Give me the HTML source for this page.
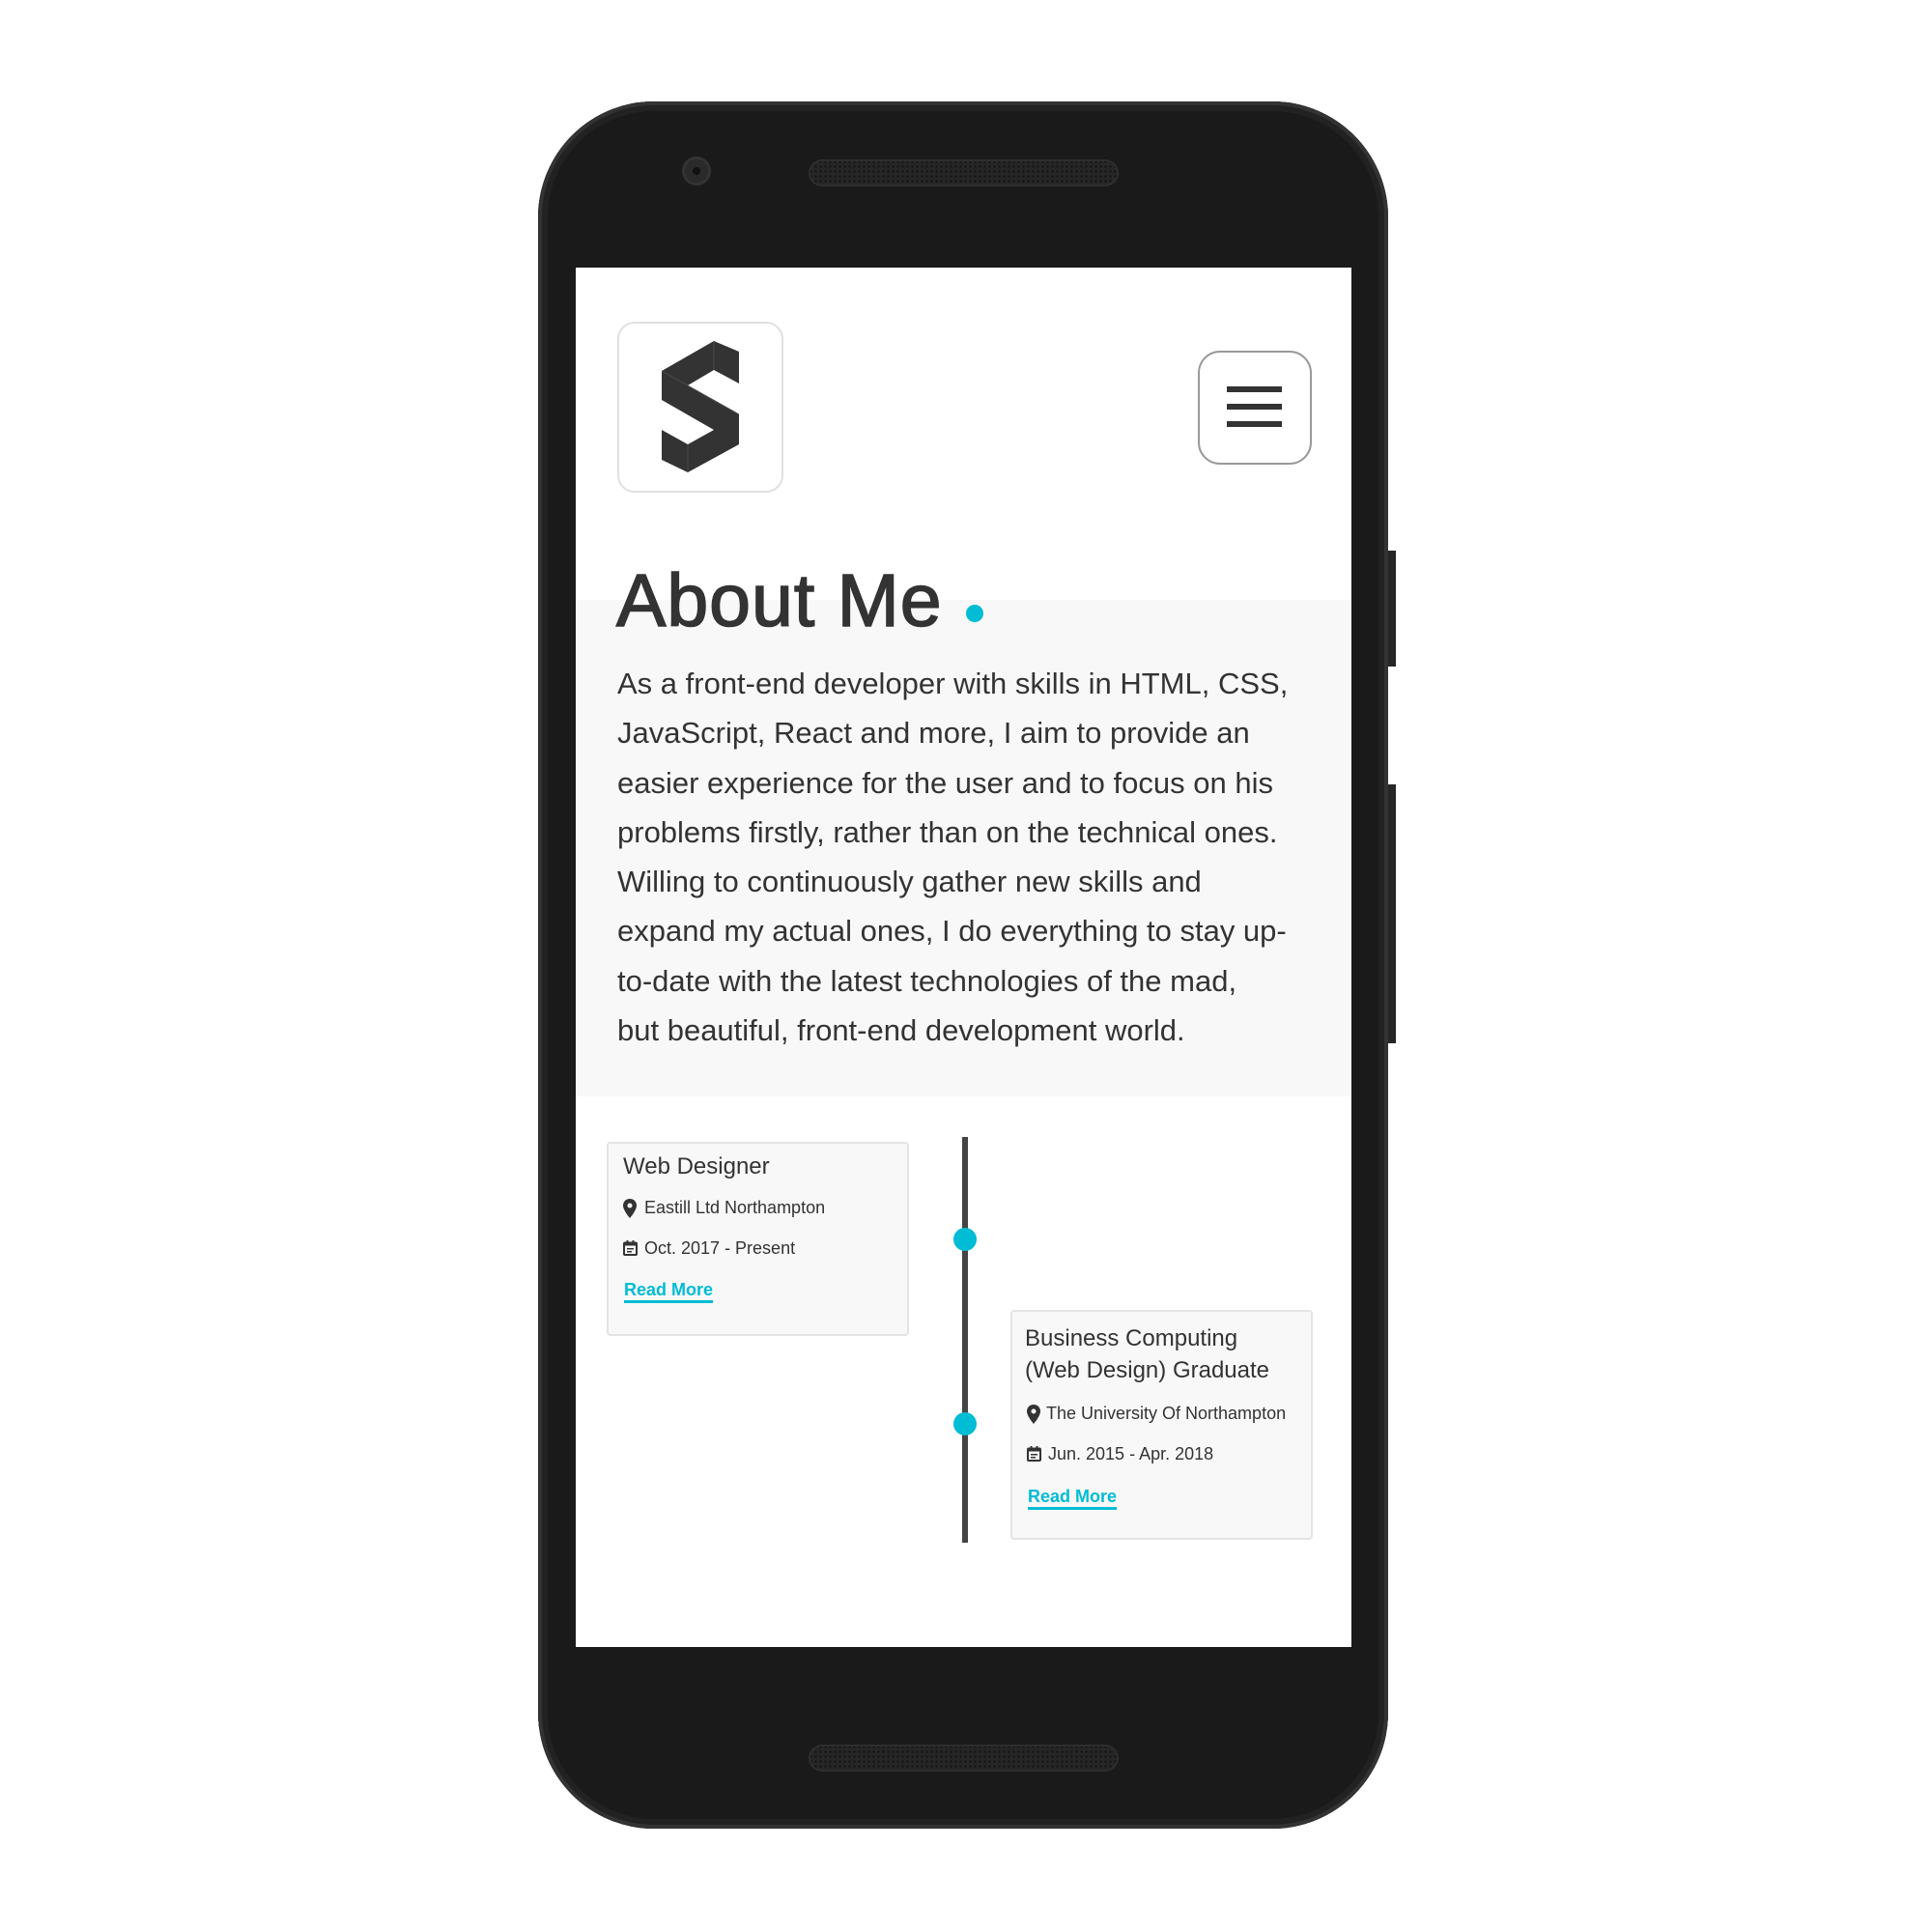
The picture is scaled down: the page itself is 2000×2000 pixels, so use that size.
<!DOCTYPE html>
<html><head><meta charset="utf-8">
<style>
html,body{margin:0;padding:0;background:#fff;width:2000px;height:2000px;overflow:hidden;font-family:"Liberation Sans","DejaVu Sans",sans-serif}
.a{position:absolute}
.phone{left:557px;top:105px;width:880px;height:1788px;border-radius:120px;background:#1a1a1a;box-shadow:inset 0 0 0 4px #333,inset 0 0 0 10px #222}
.screen{left:596px;top:277px;width:803px;height:1428px;background:#fff;overflow:hidden}
.spk{border-radius:16px;background:#262626;box-shadow:inset 0 0 0 2px #2e2e2e;background-image:radial-gradient(#111 1px,transparent 1.3px);background-size:5px 5px}
.card{background:#f8f8f8;border:2px solid #e4e4e4;border-radius:4px;box-sizing:border-box}
.t{color:#333;white-space:nowrap}
.rm{color:#00bcd4;font-weight:bold;font-size:18px;border-bottom:3px solid #00bcd4;line-height:22px}
</style></head><body>
<div class="a phone"></div>
<div class="a" style="left:1437px;top:570px;width:8px;height:120px;background:#262626"></div>
<div class="a" style="left:1437px;top:812px;width:8px;height:268px;background:#262626"></div>
<div class="a" style="left:706px;top:162px;width:30px;height:30px;border-radius:50%;background:#2a2a2a;box-shadow:inset 0 0 0 3px #333"></div>
<div class="a" style="left:717px;top:173px;width:8px;height:8px;border-radius:50%;background:#111"></div>
<div class="a spk" style="left:837px;top:165px;width:321px;height:28px"></div>
<div class="a spk" style="left:837px;top:1806px;width:321px;height:28px"></div>

<div class="a screen">
  <div class="a" style="left:0;top:344px;width:803px;height:514px;background:#f8f8f8"></div>
  <div class="a" style="left:43px;top:56px;width:172px;height:177px;border:2px solid #e0e0e0;border-radius:18px;box-sizing:border-box;background:#fff"></div>
  <svg class="a" style="left:89px;top:76px" width="82" height="138" viewBox="0 0 82 138">
    <polygon fill="#333" points="0,31 54,0 80,11 80,44 54,30 27,46 80,76 80,107 27,136 0,123 0,92 27,107 54,92 0,61"/>
    <line x1="54" y1="0" x2="54" y2="30" stroke="#4a4a4a"/>
    <line x1="27" y1="107" x2="27" y2="136" stroke="#4a4a4a"/>
    <line x1="0" y1="31" x2="80" y2="76" stroke="#4a4a4a"/>
  </svg>
  <div class="a" style="left:644px;top:86px;width:118px;height:118px;border:2px solid #999;border-radius:23px;box-sizing:border-box;background:#fff"></div>
  <div class="a" style="left:674px;top:123px;width:57px;height:6px;background:#333"></div>
  <div class="a" style="left:674px;top:141px;width:57px;height:6px;background:#333"></div>
  <div class="a" style="left:674px;top:159px;width:57px;height:6px;background:#333"></div>

  <div class="a t" style="left:42px;top:300px;font-size:77px;line-height:90px;letter-spacing:1px;-webkit-text-stroke:1.6px #333;color:#333">About Me</div>
  <div class="a" style="left:404px;top:349px;width:18px;height:18px;border-radius:50%;background:#00bcd4"></div>

  <div class="a t" style="left:43px;top:405px;font-size:31px;line-height:51.3px;color:#333">As a front-end developer with skills in HTML, CSS,<br>JavaScript, React and more, I aim to provide an<br>easier experience for the user and to focus on his<br>problems firstly, rather than on the technical ones.<br>Willing to continuously gather new skills and<br>expand my actual ones, I do everything to stay up-<br>to-date with the latest technologies of the mad,<br>but beautiful, front-end development world.</div>

  <div class="a" style="left:400px;top:900px;width:6px;height:420px;background:#444"></div>
  <div class="a" style="left:391px;top:994px;width:24px;height:24px;border-radius:50%;background:#00bcd4"></div>
  <div class="a" style="left:391px;top:1185px;width:24px;height:24px;border-radius:50%;background:#00bcd4"></div>

  <div class="a card" style="left:32px;top:905px;width:313px;height:201px"></div>
  <div class="a t" style="left:49px;top:916px;font-size:24px;line-height:30px">Web Designer</div>
  <svg class="a" style="left:49px;top:964px" width="14" height="20" viewBox="0 0 14 20"><path d="M7 0C3 0 0 3 0 7c0 5 7 13 7 13s7-8 7-13c0-4-3-7-7-7z" fill="#333"/><circle cx="7" cy="7" r="2.5" fill="#f8f8f8"/></svg>
  <div class="a t" style="left:71px;top:962px;font-size:18px;line-height:22px">Eastill Ltd Northampton</div>
  <svg class="a" style="left:49px;top:1007px" width="15" height="16" viewBox="0 0 15 16"><rect x="1" y="2.5" width="13" height="12.5" rx="1" fill="none" stroke="#333" stroke-width="2"/><rect x="1" y="2.5" width="13" height="3" fill="#333"/><rect x="3.5" y="0" width="2" height="4" fill="#333"/><rect x="9.5" y="0" width="2" height="4" fill="#333"/><rect x="4" y="8" width="7" height="1.5" fill="#333"/><rect x="4" y="11" width="5" height="1.5" fill="#333"/></svg>
  <div class="a t" style="left:71px;top:1004px;font-size:18px;line-height:22px">Oct. 2017 - Present</div>
  <div class="a rm" style="left:50px;top:1047px">Read More</div>

  <div class="a card" style="left:450px;top:1079px;width:313px;height:238px"></div>
  <div class="a t" style="left:465px;top:1092px;font-size:24px;line-height:33px">Business Computing<br>(Web Design) Graduate</div>
  <svg class="a" style="left:467px;top:1177px" width="14" height="20" viewBox="0 0 14 20"><path d="M7 0C3 0 0 3 0 7c0 5 7 13 7 13s7-8 7-13c0-4-3-7-7-7z" fill="#333"/><circle cx="7" cy="7" r="2.5" fill="#f8f8f8"/></svg>
  <div class="a t" style="left:487px;top:1175px;font-size:18px;line-height:22px">The University Of Northampton</div>
  <svg class="a" style="left:467px;top:1220px" width="15" height="16" viewBox="0 0 15 16"><rect x="1" y="2.5" width="13" height="12.5" rx="1" fill="none" stroke="#333" stroke-width="2"/><rect x="1" y="2.5" width="13" height="3" fill="#333"/><rect x="3.5" y="0" width="2" height="4" fill="#333"/><rect x="9.5" y="0" width="2" height="4" fill="#333"/><rect x="4" y="8" width="7" height="1.5" fill="#333"/><rect x="4" y="11" width="5" height="1.5" fill="#333"/></svg>
  <div class="a t" style="left:489px;top:1217px;font-size:18px;line-height:22px">Jun. 2015 - Apr. 2018</div>
  <div class="a rm" style="left:468px;top:1261px">Read More</div>
</div>
</body></html>
